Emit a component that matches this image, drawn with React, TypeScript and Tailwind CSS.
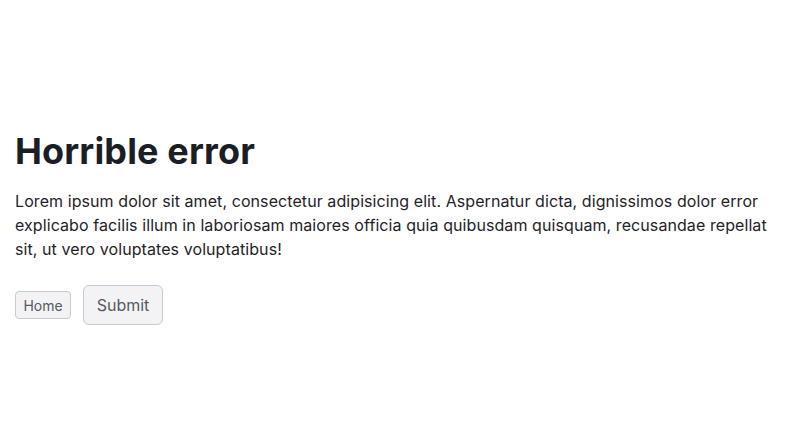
import React from 'react';

const inter = "font-['Inter',_'Liberation_Sans',_sans-serif]";

export default function App() {
  return (
    <div className={`min-h-screen bg-white px-[15px] pt-[131px] ${inter}`}>
      <h1 className="text-[36px] leading-[40px] font-bold tracking-[0.15px] text-[#1b1e24]">Horrible error</h1>
      <p className="mt-[18px] text-[16px] leading-[24px] tracking-[0.08px] text-[#1f2329]">
        Lorem ipsum dolor sit amet, consectetur adipisicing elit. Aspernatur dicta, dignissimos dolor error
        explicabo facilis illum in laboriosam maiores officia quia quibusdam quisquam, recusandae repellat
        sit, ut vero voluptates voluptatibus!
      </p>
      <div className="mt-6 flex items-center gap-3">
        <button className={`h-[28px] w-[56px] rounded-[4px] border border-[#c9c9d1] bg-[#f3f3f6] text-[14px] text-[#565961] ${inter}`}>
          Home
        </button>
        <button className={`h-[40px] w-[80px] rounded-[6px] border border-[#c9c9d1] bg-[#f3f3f6] text-[16px] text-[#565961] ${inter}`}>
          Submit
        </button>
      </div>
    </div>
  );
}
